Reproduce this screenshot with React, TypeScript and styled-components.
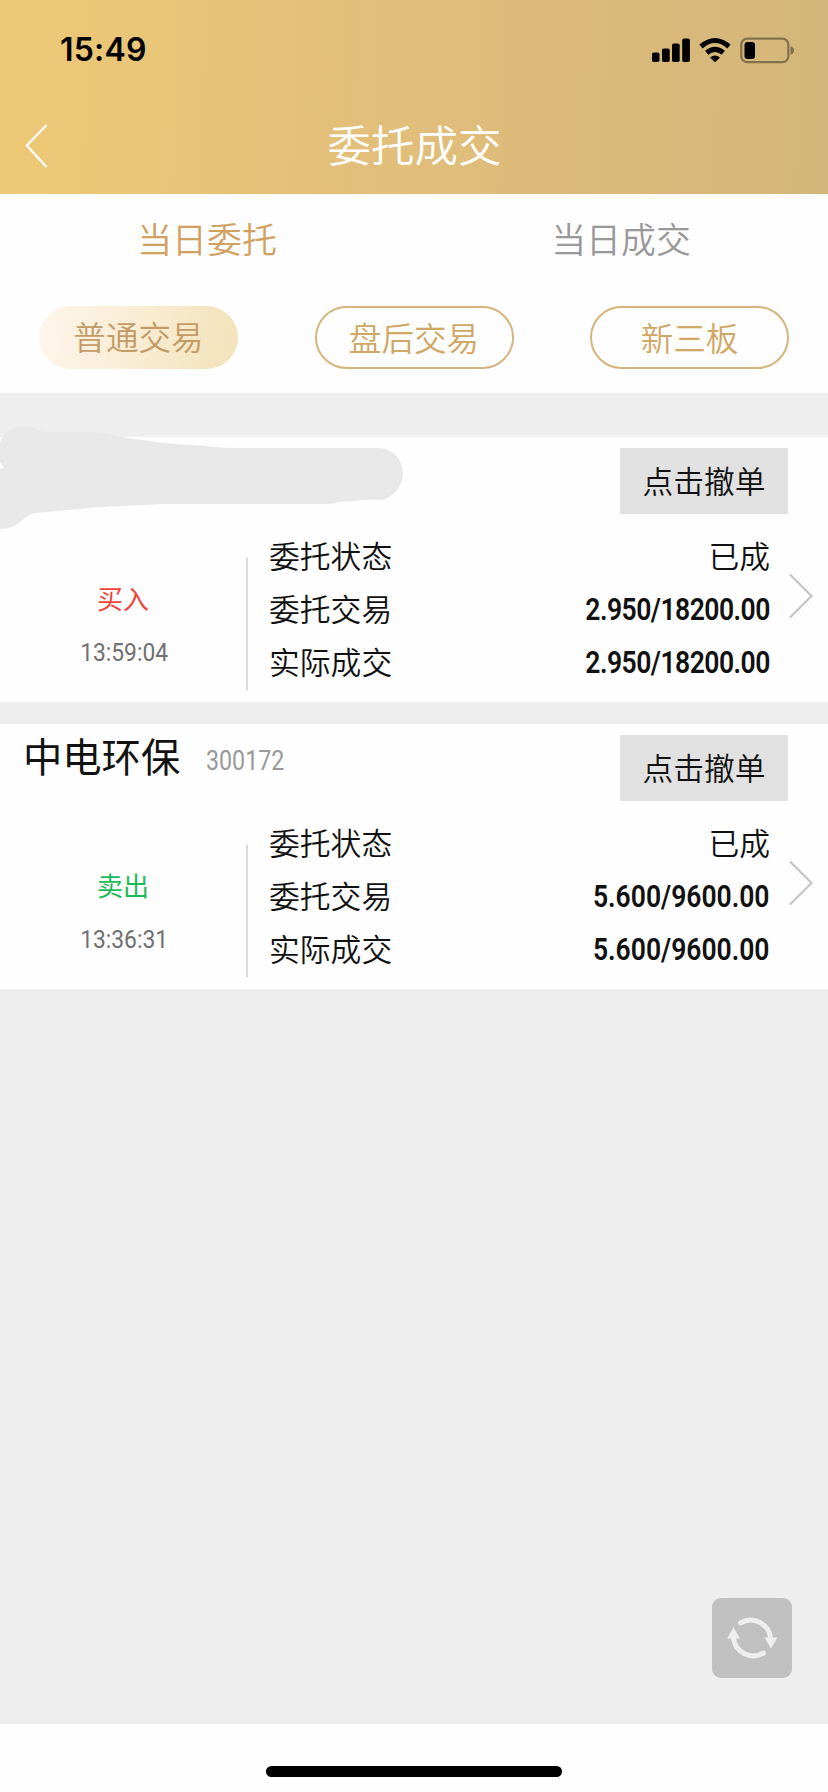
import React from "react";
import styled, { createGlobalStyle } from "styled-components";

const GlobalStyle = createGlobalStyle`
  * { box-sizing: border-box; }
  body {
    margin: 0;
    background: #eeeeee;
    font-family: "Noto Sans CJK SC", sans-serif;
    font-weight: 400;
  }
  button { font-family: inherit; border: 0; padding: 0; background: none; }
`;

const Screen = styled.div`
  position: relative;
  display: flex;
  flex-direction: column;
  width: 828px;
  height: 1792px;
  overflow: hidden;
  background: #eeeeee;
`;

const Header = styled.header`
  height: 194px;
  background: linear-gradient(92deg, #edc976 0%, #e1be7a 48%, #d3b67b 100%);
`;

const StatusBar = styled.div`
  display: flex;
  justify-content: space-between;
  align-items: center;
  height: 99px;
  padding: 0 33px 0 60px;
`;

const Clock = styled.span`
  font: 600 32px/40px Inter, sans-serif;
  letter-spacing: 0.2px;
  color: #000;
`;

const NavBar = styled.div`
  display: grid;
  grid-template-columns: 80px 1fr 80px;
  align-items: center;
  height: 94px;
`;

const BackButton = styled.button`
  display: flex;
  padding-left: 25px;
`;

const Title = styled.h1`
  margin: 0;
  padding: 0 0 4px 1px;
  text-align: center;
  font-size: 43.5px;
  line-height: 60px;
  font-weight: 350;
  color: #fff;
`;

const Filters = styled.section`
  height: 199px;
  background: #fefefe;
`;

const Tabs = styled.div`
  display: grid;
  grid-template-columns: 1fr 1fr;
  height: 91px;
  align-items: center;
`;

const Tab = styled.button<{ $active?: boolean }>`
  padding-bottom: 4px;
  font-size: 34.9px;
  line-height: 50px;
  font-weight: 350;
  color: ${(p) => (p.$active ? "#d0a161" : "#999")};
`;

const Pills = styled.div`
  display: flex;
  justify-content: space-between;
  padding: 21px 39px 0;
`;

const Pill = styled.button<{ $active?: boolean }>`
  width: 199px;
  height: 63px;
  border-radius: 32px;
  border: ${(p) => (p.$active ? "0" : "2px solid #d6b47c")};
  background: ${(p) => (p.$active ? "linear-gradient(100deg, #fef5ea 5%, #f3e4bd 92%)" : "transparent")};
  padding-bottom: ${(p) => (p.$active ? "4px" : "1px")};
  color: ${(p) => (p.$active ? "#c49b67" : "#d0a765")};
  font-size: 32.6px;
  line-height: 48px;
  font-weight: 350;
`;

const Orders = styled.main`
  display: flex;
  flex-direction: column;
  gap: 22px;
  flex: 1;
  padding-top: 44px;
`;

const Card = styled.article`
  position: relative;
  height: 265px;
  background: #fefefe;
`;

const CardHead = styled.div`
  display: flex;
  justify-content: space-between;
  height: 77px;
  padding: 11px 40px 0 23px;
`;

const Stock = styled.div`
  display: flex;
  align-items: flex-start;
  gap: 26px;
`;

const StockName = styled.span`
  margin-top: -3px;
  font-size: 39.3px;
  line-height: 46px;
  color: #111;
`;

const StockCode = styled.span`
  margin-top: 11px;
  font: 400 27px/30px Roboto, sans-serif;
  transform: scaleX(0.86);
  transform-origin: left;
  color: #999;
`;

const CancelButton = styled.button`
  width: 168px;
  height: 66px;
  padding-bottom: 2px;
  background: #e1e1e1;
  color: #111;
  font-size: 30.8px;
  line-height: 46px;
  font-weight: 350;
`;

const CardBody = styled.div`
  display: grid;
  grid-template-columns: 246px 2px 540px 1fr;
  height: 188px;
`;

const Side = styled.div`
  display: flex;
  flex-direction: column;
  align-items: center;
  padding-top: 64px;
`;

const Direction = styled.span<{ $sell?: boolean }>`
  font-size: 26px;
  line-height: 40px;
  color: ${(p) => (p.$sell ? "#1dba58" : "#f0443a")};
`;

const Time = styled.span`
  margin: 14px 0 0 2px;
  font: 400 26.5px/40px Roboto, sans-serif;
  transform: scaleX(0.86);
  color: #707070;
`;

const Divider = styled.div`
  height: 132px;
  margin-top: 44px;
  background: #dadada;
`;

const Details = styled.dl`
  margin: 0;
  padding: 14px 18px 0 21px;
`;

const DetailRow = styled.div`
  display: flex;
  justify-content: space-between;
  align-items: center;
  height: 53px;
`;

const Label = styled.dt`
  font-size: 30.8px;
  line-height: 46px;
  font-weight: 350;
  color: #111;
`;

const Value = styled.dd`
  margin: 0;
  font-size: 30.8px;
  line-height: 46px;
  font-weight: 350;
  color: #111;
`;

const Amount = styled.dd<{ $tracking?: string }>`
  margin: 5px 0 0;
  font: 600 31px/46px Roboto, sans-serif;
  letter-spacing: ${(p) => p.$tracking ?? "0"};
  transform: scaleX(0.855);
  transform-origin: right;
  color: #111;
`;

const More = styled.div`
  padding: 59px 0 0 1px;
`;

const Smudge = styled.svg`
  position: absolute;
  left: 0;
  top: -12px;
`;

const RefreshButton = styled.button`
  position: absolute;
  right: 36px;
  bottom: 114px;
  display: flex;
  width: 80px;
  height: 80px;
  border-radius: 9px;
  background: #c0c0c0;
`;

const HomeArea = styled.footer`
  display: flex;
  justify-content: center;
  height: 68px;
  padding-top: 42px;
  background: #fefefe;
`;

const HomeIndicator = styled.div`
  width: 296px;
  height: 11px;
  border-radius: 6px;
  background: #000;
`;

const StatusIcons = () => (
  <svg width="144" height="28" viewBox="651 35 144 28">
    <rect x="652" y="51.5" width="7.5" height="9.5" rx="1.8" />
    <rect x="662" y="47.5" width="7.7" height="13.5" rx="1.8" />
    <rect x="672" y="42.5" width="7.7" height="18.5" rx="1.8" />
    <rect x="682.2" y="37.5" width="7.7" height="23.5" rx="1.8" />
    <g fill="none" stroke="#000" strokeWidth="5">
      <path d="M701 45.5 Q715 33.5 729 45.5" />
      <path d="M706.7 51.8 Q715 45 723.3 51.8" />
    </g>
    <path d="M710 56.5 Q715 52.5 720 56.5 L715 61.3 Z" />
    <rect x="741.3" y="37.6" width="47" height="23.6" rx="6" fill="none" stroke="#000" strokeOpacity="0.38" strokeWidth="2.2" />
    <rect x="744.5" y="41" width="10.5" height="17" rx="3" />
    <path d="M790.5 45.5 Q794 46.3 794 49.5 Q794 52.7 790.5 53.5 Z" fillOpacity="0.4" />
  </svg>
);

interface Order {
  name?: string;
  code?: string;
  sell?: boolean;
  time: string;
  amount: string;
  tracking?: string;
}

const orders: Order[] = [
  { time: "13:59:04", amount: "2.950/18200.00", tracking: "-0.6px" },
  { name: "中电环保", code: "300172", sell: true, time: "13:36:31", amount: "5.600/9600.00" },
];

const OrderCard = ({ order }: { order: Order }) => (
  <Card>
    <CardHead>
      <Stock>
        {order.name && <StockName>{order.name}</StockName>}
        {order.code && <StockCode>{order.code}</StockCode>}
      </Stock>
      <CancelButton>点击撤单</CancelButton>
    </CardHead>
    <CardBody>
      <Side>
        <Direction $sell={order.sell}>{order.sell ? "卖出" : "买入"}</Direction>
        <Time>{order.time}</Time>
      </Side>
      <Divider />
      <Details>
        <DetailRow>
          <Label>委托状态</Label>
          <Value>已成</Value>
        </DetailRow>
        <DetailRow>
          <Label>委托交易</Label>
          <Amount $tracking={order.tracking}>{order.amount}</Amount>
        </DetailRow>
        <DetailRow>
          <Label>实际成交</Label>
          <Amount $tracking={order.tracking}>{order.amount}</Amount>
        </DetailRow>
      </Details>
      <More>
        <svg width="26" height="46" viewBox="0 0 26 46" fill="none" stroke="#c6c6c6" strokeWidth="2.2">
          <path d="M1 1.5 L22.5 23 L1 44.5" />
        </svg>
      </More>
    </CardBody>
    {!order.name && (
      <Smudge width="404" height="105" viewBox="0 424 404 105" fill="#e8e8e8">
        <path d="M0 442 C4 430 14 425 25 425 C34 425 38 431 46 431 L96 431 C108 432 115 435 135 438 C155 441 170 443 190 444 C205 444 215 447 230 447 L380 447 C394 448 403 460 403 473 C402 487 391 498 380 499 C365 498 350 501 340 501 L330 503 L165 503 C120 505 105 505 80 508 L35 512 C22 515 19 528 0 528 L0 468 L4 467 L0 461 Z" />
      </Smudge>
    )}
  </Card>
);

export default function App() {
  return (
    <Screen>
      <GlobalStyle />
      <Header>
        <StatusBar>
          <Clock>15:49</Clock>
          <StatusIcons />
        </StatusBar>
        <NavBar>
          <BackButton aria-label="返回">
            <svg width="24" height="44" viewBox="0 0 24 44" fill="none" stroke="#fff" strokeWidth="2.3">
              <path d="M21.5 1 L1.8 21.5 L21.5 43" />
            </svg>
          </BackButton>
          <Title>委托成交</Title>
        </NavBar>
      </Header>
      <Filters>
        <Tabs>
          <Tab $active>当日委托</Tab>
          <Tab>当日成交</Tab>
        </Tabs>
        <Pills>
          <Pill $active>普通交易</Pill>
          <Pill>盘后交易</Pill>
          <Pill>新三板</Pill>
        </Pills>
      </Filters>
      <Orders>
        {orders.map((order) => (
          <OrderCard key={order.time} order={order} />
        ))}
      </Orders>
      <HomeArea>
        <HomeIndicator />
      </HomeArea>
      <RefreshButton aria-label="刷新">
        <svg width="80" height="80" viewBox="0 0 80 80" fill="none" stroke="#eee" strokeWidth="5" strokeLinecap="round">
          <path d="M28.5 25 A20 20 0 0 1 58.5 40" />
          <path d="M51.5 55 A20 20 0 0 1 21.5 40" />
          <path d="M52.5 39.5 H65.5 L59 50.5 Z M15 40.5 H28 L21.5 29.5 Z" fill="#eee" stroke="none" />
        </svg>
      </RefreshButton>
    </Screen>
  );
}
